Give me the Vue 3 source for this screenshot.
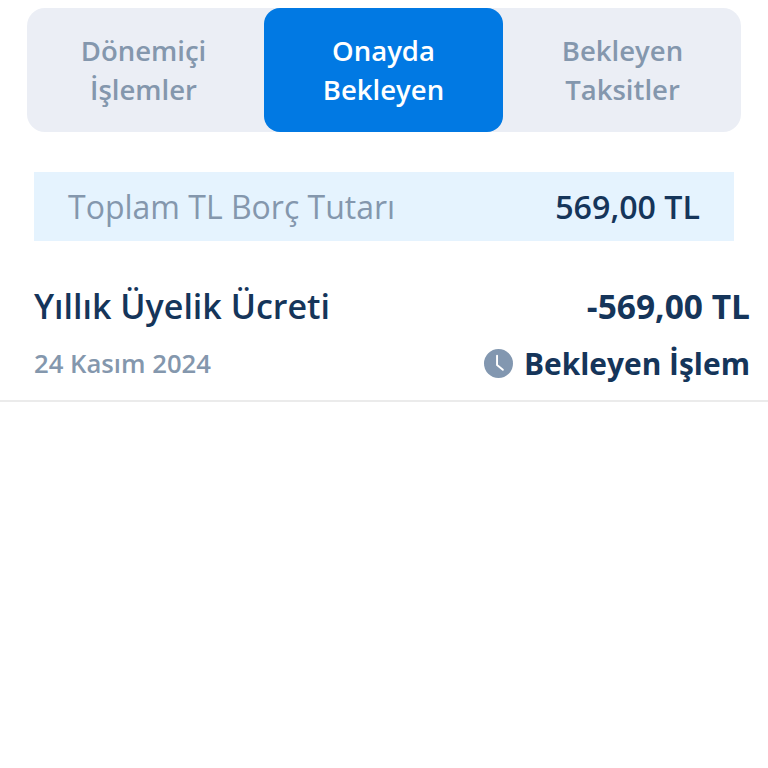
<template>
  <div class="page">
    <div class="tabs">
      <button
        v-for="(tab, i) in tabs"
        :key="tab[0]"
        class="tab"
        :class="{ active: i === activeTab }"
        @click="activeTab = i">
        <span>{{ tab[0] }}</span>
        <span>{{ tab[1] }}</span>
      </button>
    </div>

    <div class="total">
      <span class="total-label">Toplam TL Borç Tutarı</span>
      <span class="total-value">569,00 TL</span>
    </div>

    <div class="row">
      <div class="row-line">
        <span class="row-title">Yıllık Üyelik Ücreti</span>
        <span class="row-amount">-569,00 TL</span>
      </div>
      <div class="row-line second">
        <span class="row-date">24 Kasım 2024</span>
        <span class="row-status">
          <svg width="29" height="29" viewBox="0 0 30 30">
            <circle cx="15" cy="15" r="15" fill="#8297b0" />
            <path d="M13.5 7V16.5l6 5" fill="none" stroke="#fff" stroke-width="2" stroke-linecap="round" stroke-linejoin="round" />
          </svg>
          Bekleyen İşlem
        </span>
      </div>
    </div>
  </div>
</template>

<script setup>
import { ref } from 'vue';

const tabs = [
  ['Dönemiçi', 'İşlemler'],
  ['Onayda', 'Bekleyen'],
  ['Bekleyen', 'Taksitler']
];
const activeTab = ref(1);
</script>

<style>
html, body {
  background: #fff;
}
</style>

<style scoped>
.page {
  width: 768px;
  height: 768px;
  padding-top: 8px;
  box-sizing: border-box;
  font-family: "Open Sans", "Noto Sans", sans-serif;
  overflow: hidden;
}
.tabs {
  display: grid;
  grid-template-columns: 237px 239px 238px;
  width: 714px;
  height: 124px;
  margin-left: 27px;
  background: #ebeef5;
  border-radius: 18px;
}
.tab {
  display: flex;
  flex-direction: column;
  align-items: center;
  justify-content: center;
  border: 0;
  padding: 0;
  background: transparent;
  color: #8497ad;
  font: inherit;
  font-size: 27.5px;
  font-weight: 600;
  line-height: 39.5px;
}
.tab:first-child {
  padding-right: 4px;
}
.tab:last-child {
  padding-left: 1px;
}
.tab.active {
  background: #0179e3;
  color: #fff;
  border-radius: 16px;
}
.total {
  display: flex;
  justify-content: space-between;
  align-items: center;
  width: 700px;
  height: 69px;
  margin: 40px 0 0 34px;
  padding: 0 34px;
  box-sizing: border-box;
  background: #e5f3fe;
}
.total-label {
  color: #8497ad;
  font-size: 32px;
}
.total-value {
  color: #15355a;
  font-size: 32.2px;
  font-weight: 600;
}
.row {
  height: 161px;
  padding: 0 18px 0 34px;
  box-sizing: border-box;
  border-bottom: 2px solid #ebebeb;
}
.row-line {
  display: flex;
  justify-content: space-between;
  align-items: center;
  padding-top: 38px;
  height: 92px;
  box-sizing: border-box;
}
.row-line.second {
  padding-top: 4px;
  height: 56px;
}
.row-title,
.row-amount {
  color: #15355a;
  font-size: 34px;
  font-weight: 600;
}
.row-amount {
  font-size: 33.5px;
  font-weight: 700;
}
.row-date {
  color: #8497ad;
  font-size: 25.7px;
  font-weight: 600;
}
.row-status {
  display: flex;
  align-items: center;
  gap: 11px;
  color: #15355a;
  font-size: 29.9px;
  font-weight: 700;
}
</style>
